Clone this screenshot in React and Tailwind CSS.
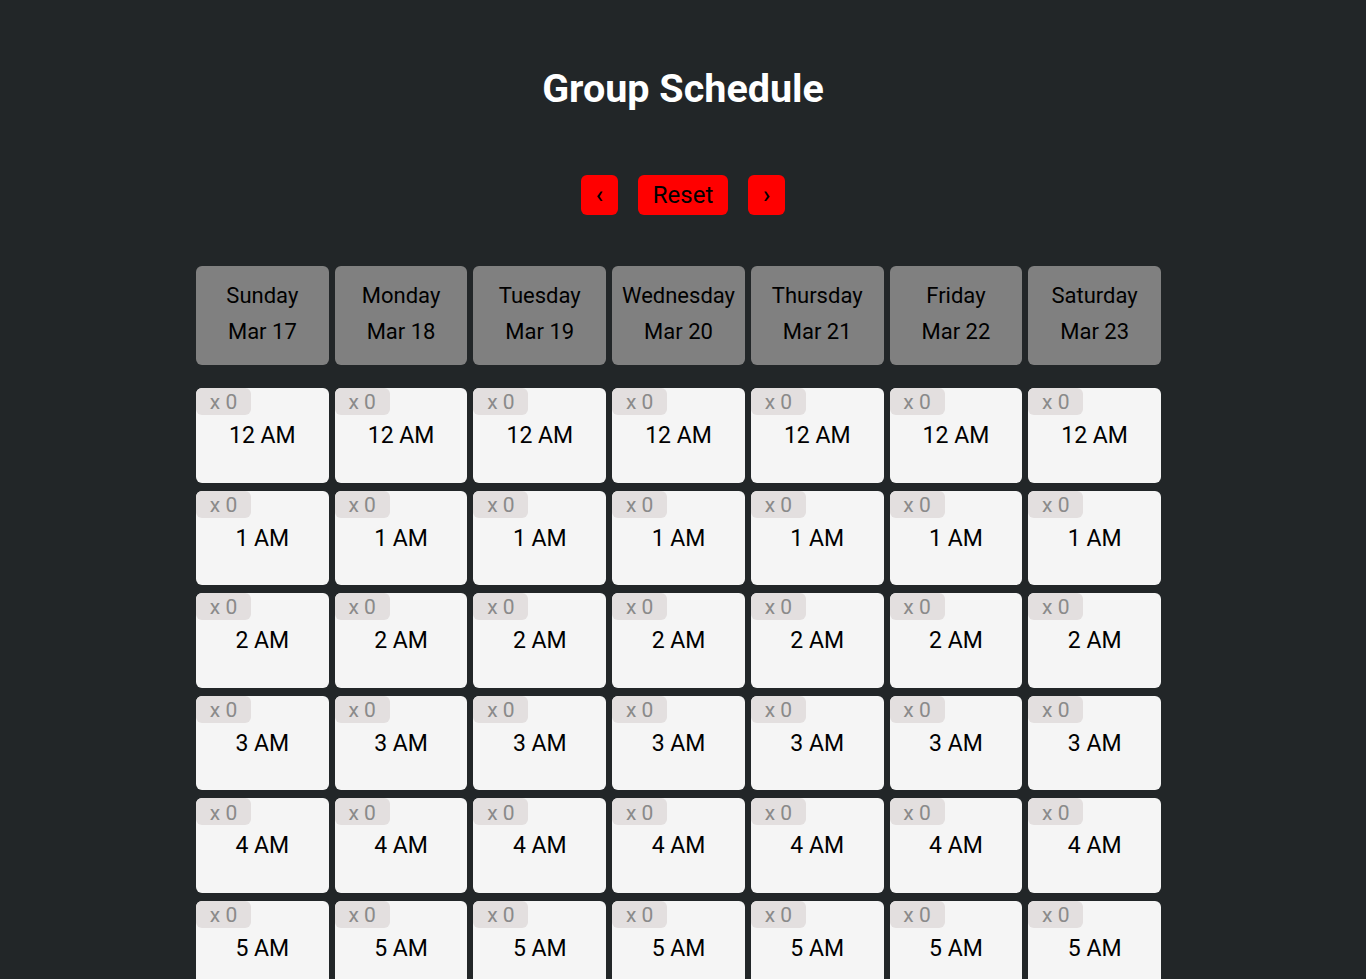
import React from "react";

const days = [
  ["Sunday", "Mar 17"],
  ["Monday", "Mar 18"],
  ["Tuesday", "Mar 19"],
  ["Wednesday", "Mar 20"],
  ["Thursday", "Mar 21"],
  ["Friday", "Mar 22"],
  ["Saturday", "Mar 23"],
];

const hours = Array.from({ length: 24 }, (_, i) => {
  const h = i % 12 === 0 ? 12 : i % 12;
  return `${h} ${i < 12 ? "AM" : "PM"}`;
});

export default function App() {
  return (
    <div
      className="min-h-screen bg-[#222628] pb-10"
      style={{ fontFamily: "Roboto, 'Liberation Sans', sans-serif" }}
    >
      <h1 className="pt-[63px] text-center text-[39.5px] font-bold leading-[52px] text-white">
        Group Schedule
      </h1>
      <div className="mt-[60px] flex justify-center gap-[20px]">
        <button className="flex h-[40px] w-[37px] items-center justify-center rounded-[6px] bg-[#ff0000] text-[24px] font-medium text-black">
          ‹
        </button>
        <button className="flex h-[40px] w-[90px] items-center justify-center rounded-[6px] bg-[#ff0000] text-[24px] text-black">
          Reset
        </button>
        <button className="flex h-[40px] w-[37px] items-center justify-center rounded-[6px] bg-[#ff0000] text-[24px] font-medium text-black">
          ›
        </button>
      </div>
      <div className="mx-auto mt-[51px] w-[974px]">
        <div className="grid w-[965px] grid-cols-7 gap-x-[6px]">
          {days.map(([d, m]) => (
            <div
              key={d}
              className="h-[99px] rounded-[6px] bg-[#808080] pt-[12px] text-center text-[22px] leading-[36px] text-black"
            >
              <div>{d}</div>
              <div>{m}</div>
            </div>
          ))}
        </div>
        <div className="mt-[23px] grid w-[965px] grid-cols-7 gap-x-[6px] gap-y-[8px]">
          {hours.map((h) =>
            days.map(([d]) => (
              <div
                key={d + h}
                className="h-[94.6px] rounded-[6px] bg-[#f5f5f5]"
              >
                <div className="flex h-[27px] w-[55px] items-center justify-center rounded-[6px] bg-[#e3dfdf] pt-[3px] text-[21px] text-[#8a8a8a]">
                  x 0
                </div>
                <div className="mt-[6px] text-center text-[23px] leading-[30px] text-black">
                  {h}
                </div>
              </div>
            ))
          )}
        </div>
      </div>
    </div>
  );
}
